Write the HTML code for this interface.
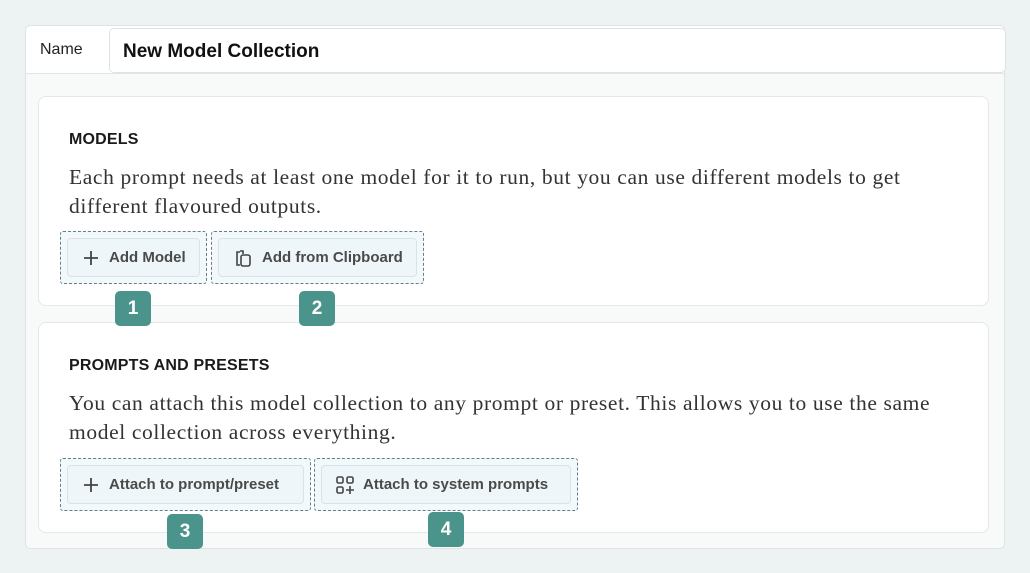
<!DOCTYPE html>
<html><head><style>
*{box-sizing:border-box;margin:0;padding:0}
body{width:1030px;height:573px;background:#edf3f2;position:relative;font-family:"Liberation Sans",sans-serif;overflow:hidden}
.card{position:absolute;left:25px;top:25px;width:980px;height:524px;background:#f8f9f9;border:1px solid #dfe3e3;border-radius:5px}
.namerow{position:absolute;left:0;top:0;width:978px;height:48px;background:#fff;border-bottom:1px solid #e2e5e5;border-radius:5px 5px 0 0}
.lbl{position:absolute;left:14px;top:15px;font-size:16px;color:#222}
.inp{position:absolute;left:83px;top:2px;width:897px;height:45px;border:1px solid #e0e3e3;border-radius:5px;background:#fff;font-size:19px;font-weight:bold;color:#111;padding:12px 0 0 13px}
.panel{position:absolute;left:12px;width:951px;background:#fff;border:1px solid #e5e8e8;border-radius:8px}
h3{position:absolute;left:30px;font-size:16px;font-weight:bold;color:#1a1a1a;letter-spacing:.2px}
p{position:absolute;left:30px;width:882px;font-family:"Liberation Serif",serif;font-size:21.5px;letter-spacing:0.62px;line-height:29px;color:#333}
.dash{position:absolute;border:1.5px dashed #5f7f95;border-radius:3px;background:#f3f8fb}
.btn{position:absolute;top:6px;left:6px;bottom:6px;right:6px;border:1px solid #d7e3e8;border-radius:4px;background:#eff6f9;font-size:15px;font-weight:bold;color:#4a4a4a;display:flex;align-items:center;padding-left:13px;gap:8px}
.badge{position:absolute;width:36px;height:35px;background:#4a948b;border-radius:5px;color:#fff;font-weight:bold;font-size:19px;text-align:center;line-height:35px}
</style></head><body>
<div class="card">
 <div class="namerow"><div class="lbl">Name</div><div class="inp">New Model Collection</div></div>
 <div class="panel" style="top:70px;height:210px">
  <h3 style="top:34px">MODELS</h3>
  <p style="top:66px">Each prompt needs at least one model for it to run, but you can use different models to get different flavoured outputs.</p>
 </div>
 <div class="panel" style="top:296px;height:211px">
  <h3 style="top:34px">PROMPTS AND PRESETS</h3>
  <p style="top:66px">You can attach this model collection to any prompt or preset. This allows you to use the same model collection across everything.</p>
 </div>
</div>
<div class="dash" style="left:60px;top:231px;width:147px;height:53px"><div class="btn"><svg width="20" height="20" viewBox="0 0 20 20"><path d="M10 3v14M3 10h14" stroke="#444" stroke-width="1.8"/></svg>Add Model</div></div>
<div class="dash" style="left:211px;top:231px;width:213px;height:53px"><div class="btn"><svg width="22" height="22" viewBox="0 0 22 22" fill="none" stroke="#444" stroke-width="1.6"><path d="M8 5H5v13h3"/><path d="M8 4h3v3"/><rect x="9" y="8" width="9" height="11" rx="2"/></svg>Add from Clipboard</div></div>
<div class="dash" style="left:60px;top:458px;width:251px;height:53px"><div class="btn"><svg width="20" height="20" viewBox="0 0 20 20"><path d="M10 3v14M3 10h14" stroke="#444" stroke-width="1.8"/></svg>Attach to prompt/preset</div></div>
<div class="dash" style="left:314px;top:458px;width:264px;height:53px"><div class="btn"><svg width="20" height="20" viewBox="0 0 20 20" fill="none" stroke="#444" stroke-width="1.6"><rect x="2" y="2" width="6" height="6" rx="1.5"/><rect x="12" y="2" width="6" height="6" rx="1.5"/><rect x="2" y="12" width="6" height="6" rx="1.5"/><path d="M15 11v8M11 15h8"/></svg>Attach to system prompts</div></div>
<div class="badge" style="left:115px;top:291px">1</div>
<div class="badge" style="left:299px;top:291px">2</div>
<div class="badge" style="left:167px;top:514px">3</div>
<div class="badge" style="left:428px;top:512px">4</div>
</body></html>
